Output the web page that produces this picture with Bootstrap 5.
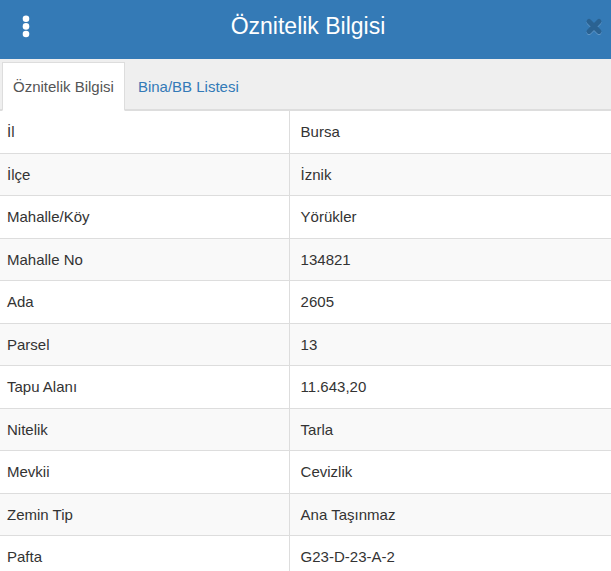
<!DOCTYPE html>
<html lang="tr">
<head>
<meta charset="utf-8">
<meta name="viewport" content="width=device-width, initial-scale=1">
<title>Öznitelik Bilgisi</title>
<link href="https://cdn.jsdelivr.net/npm/bootstrap@5.3.0/dist/css/bootstrap.min.css" rel="stylesheet">
<style>
  body { font-family: "Liberation Sans", Arial, sans-serif; font-size: 15px; line-height: 20px; color: #333; }
  .panel-head { background: #347ab6; padding: 10px 8px 17px 21px; }
  .panel-title { font-size: 23px; line-height: 32px; }
  .head-btn { line-height: 0; }
  .info-tabs { background: #efefef; border-bottom: 2px solid #ddd; padding: 3px 2px 0; }
  .info-tabs .nav-link { color: #337ab7; padding: 14px 10px 12px; border-radius: 0; margin-bottom: -1px; border: 1px solid transparent; }
  .info-tabs .nav-item + .nav-item { margin-left: 2px; }
  .info-tabs .nav-link.active { color: #555; background: #fff; border-color: #ddd #ddd #fff; margin-bottom: -2px; padding-bottom: 13px; }
  .info-scroll { scrollbar-width: none; }
  .info-scroll::-webkit-scrollbar { display: none; }
  .info-table { color: #333; border-color: #ddd; table-layout: fixed; border-collapse: separate; border-spacing: 0; }
  .info-table th, .info-table td { padding: 11px 11px 10px; height: 42px; }
  .info-table th { width: 47.4%; padding-left: 7px; border-right: 1px solid #ddd; font-weight: 400; }
  .info-table tr:nth-child(odd) > * { height: 43px; }
  .info-table tr:nth-child(even) > * { background: #f9f9f9; }
</style>
<script src="https://cdn.jsdelivr.net/npm/bootstrap@5.3.0/dist/js/bootstrap.bundle.min.js" defer></script>
</head>
<body class="vh-100 overflow-hidden d-flex flex-column">
<header class="panel-head d-flex align-items-center justify-content-between">
  <button type="button" class="head-btn btn p-0 border-0" aria-label="Menü">
    <svg width="10" height="24" viewBox="0 0 10 24" fill="#fff" aria-hidden="true"><circle cx="5" cy="4.8" r="3.3"/><circle cx="5" cy="12.4" r="3.3"/><circle cx="5" cy="20" r="3.3"/></svg>
  </button>
  <h1 class="panel-title text-white fw-normal m-0">Öznitelik Bilgisi</h1>
  <button type="button" class="head-btn btn p-0 border-0" aria-label="Kapat">
    <svg width="18" height="20" viewBox="0 0 18 20" aria-hidden="true"><g fill="none" stroke-width="5" stroke-linecap="round"><path d="M4 6.4l10 10M14 6.4l-10 10" stroke="#6096c6"/><path d="M4 5.4l10 10M14 5.4l-10 10" stroke="#2a6292"/></g></svg>
  </button>
</header>
<ul class="info-tabs nav nav-tabs flex-nowrap">
  <li class="nav-item"><a class="nav-link active" aria-current="page" href="#bilgi">Öznitelik Bilgisi</a></li>
  <li class="nav-item"><a class="nav-link" href="#liste">Bina/BB Listesi</a></li>
</ul>
<main class="info-scroll flex-fill overflow-auto" id="bilgi">
  <table class="info-table table m-0 align-top">
    <tbody>
      <tr><th scope="row">İl</th><td>Bursa</td></tr>
      <tr><th scope="row">İlçe</th><td>İznik</td></tr>
      <tr><th scope="row">Mahalle/Köy</th><td>Yörükler</td></tr>
      <tr><th scope="row">Mahalle No</th><td>134821</td></tr>
      <tr><th scope="row">Ada</th><td>2605</td></tr>
      <tr><th scope="row">Parsel</th><td>13</td></tr>
      <tr><th scope="row">Tapu Alanı</th><td>11.643,20</td></tr>
      <tr><th scope="row">Nitelik</th><td>Tarla</td></tr>
      <tr><th scope="row">Mevkii</th><td>Cevizlik</td></tr>
      <tr><th scope="row">Zemin Tip</th><td>Ana Taşınmaz</td></tr>
      <tr><th scope="row">Pafta</th><td>G23-D-23-A-2</td></tr>
    </tbody>
  </table>
</main>
</body>
</html>
